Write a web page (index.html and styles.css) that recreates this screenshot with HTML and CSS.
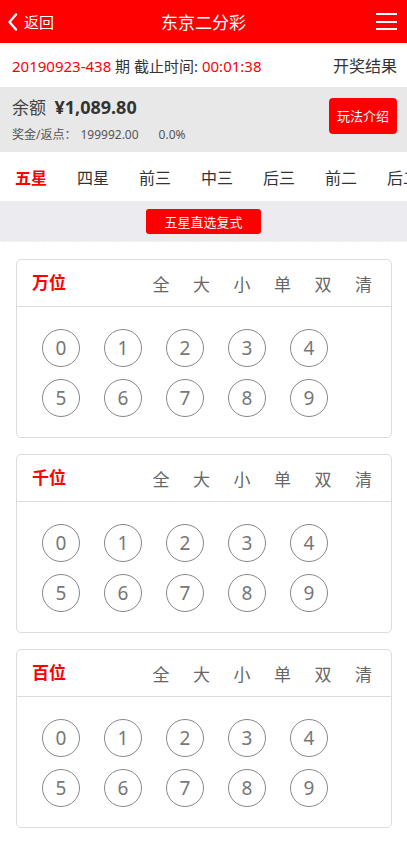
FILE: index.html
```html
<!DOCTYPE html>
<html lang="zh">
<head>
<meta charset="utf-8">
<link rel="stylesheet" href="styles.css">
</head>
<body>
<div class="app">
  <header class="topbar">
    <div class="back">
      <svg class="chev" width="11" height="18" viewBox="0 0 11 18"><path d="M9 1.5 L2.5 9 L9 16.5" fill="none" stroke="#fff" stroke-width="2.4" stroke-linecap="round" stroke-linejoin="round"/></svg>
      <span>返回</span>
    </div>
    <div class="title">东京二分彩</div>
    <div class="menu"><i></i><i></i><i></i></div>
  </header>

  <div class="issue">
    <div class="issue-left"><span class="red">20190923-438</span> 期 截止时间: <span class="red">00:01:38</span></div>
    <div class="issue-right">开奖结果</div>
  </div>

  <div class="balance">
    <div class="bal-info">
      <div class="bal-line"><span class="bal-label">余额</span> <b class="bal-amt">¥1,089.80</b></div>
      <div class="bal-sub"><span>奖金/返点：</span><span class="bal-num">199992.00</span><span class="bal-num2">0.0%</span></div>
    </div>
    <div class="rule-btn">玩法介绍</div>
  </div>

  <nav class="tabs">
    <span class="tab active">五星</span>
    <span class="tab">四星</span>
    <span class="tab">前三</span>
    <span class="tab">中三</span>
    <span class="tab">后三</span>
    <span class="tab">前二</span>
    <span class="tab">后二</span>
  </nav>

  <div class="mode-band"><div class="mode-btn">五星直选复式</div></div>

  <section class="cards">
    <div class="card">
      <div class="card-head"><span class="pos">万位</span><div class="ops"><span>全</span><span>大</span><span>小</span><span>单</span><span>双</span><span>清</span></div></div>
      <div class="balls">
        <span class="ball">0</span><span class="ball">1</span><span class="ball">2</span><span class="ball">3</span><span class="ball">4</span>
        <span class="ball">5</span><span class="ball">6</span><span class="ball">7</span><span class="ball">8</span><span class="ball">9</span>
      </div>
    </div>
    <div class="card">
      <div class="card-head"><span class="pos">千位</span><div class="ops"><span>全</span><span>大</span><span>小</span><span>单</span><span>双</span><span>清</span></div></div>
      <div class="balls">
        <span class="ball">0</span><span class="ball">1</span><span class="ball">2</span><span class="ball">3</span><span class="ball">4</span>
        <span class="ball">5</span><span class="ball">6</span><span class="ball">7</span><span class="ball">8</span><span class="ball">9</span>
      </div>
    </div>
    <div class="card">
      <div class="card-head"><span class="pos">百位</span><div class="ops"><span>全</span><span>大</span><span>小</span><span>单</span><span>双</span><span>清</span></div></div>
      <div class="balls">
        <span class="ball">0</span><span class="ball">1</span><span class="ball">2</span><span class="ball">3</span><span class="ball">4</span>
        <span class="ball">5</span><span class="ball">6</span><span class="ball">7</span><span class="ball">8</span><span class="ball">9</span>
      </div>
    </div>
  </section>
</div>
</body>
</html>
```
FILE: styles.css
```css
* { box-sizing: border-box; margin: 0; padding: 0; }
html, body { background: #fff; }
body {
  margin: 0;
  font-family: "Noto Sans", "Noto Sans CJK SC", sans-serif;
  color: #333;
  overflow: hidden;
}
.app { width: 407px; }

.topbar {
  height: 43px;
  background: #ff0000;
  color: #fff;
  display: flex;
  align-items: center;
  justify-content: space-between;
  padding: 0 10px 0 7px;
  position: relative;
}
.back { display: flex; align-items: center; gap: 6px; font-size: 15px; }
.chev { display: block; }
.title {
  position: absolute;
  left: 0; right: 0;
  text-align: center;
  font-size: 17px;
  pointer-events: none;
}
.menu { width: 21px; display: flex; flex-direction: column; gap: 5.5px; }
.menu i { display: block; height: 2px; background: #fff; }

.issue {
  height: 44px;
  display: flex;
  align-items: center;
  justify-content: space-between;
  padding: 0 10px 0 12px;
  font-size: 15px;
  color: #333;
}
.red { color: #ff0000; }
.issue-right { font-size: 16px; }

.balance {
  height: 65px;
  background: #e8e8e8;
  display: flex;
  align-items: center;
  justify-content: space-between;
  padding: 0 10px 0 12px;
}
.bal-line { font-size: 17px; color: #444; line-height: 22px; }
.bal-amt { font-size: 18px; color: #333; font-weight: 700; margin-left: 4px; }
.bal-sub { font-size: 12px; color: #555; margin-top: 6px; }
.bal-num { margin-left: 4px; }
.bal-num2 { margin-left: 20px; }
.rule-btn {
  background: #ff0000;
  color: #fff;
  font-size: 13px;
  width: 68px;
  height: 36px;
  border-radius: 4px;
  display: flex;
  align-items: center;
  justify-content: center;
  margin-top: -8px;
}

.tabs {
  height: 49px;
  display: flex;
  align-items: center;
  white-space: nowrap;
  overflow: hidden;
  background: #fff;
}
.tab { padding: 0 15px; font-size: 16px; color: #333; flex: none; width: 62px; }
.tab.active { color: #ff0000; font-weight: 700; }

.mode-band {
  height: 41px;
  background: #ebebf0;
  display: flex;
  align-items: center;
  justify-content: center;
  border-bottom: 1px dashed #f4f4f4;
}
.mode-btn {
  background: #ff0000;
  color: #fff;
  font-size: 13px;
  width: 115px;
  height: 25px;
  border-radius: 3px;
  display: flex;
  align-items: center;
  justify-content: center;
}

.cards { padding: 17px 15px 0 16px; display: flex; flex-direction: column; gap: 16px; }
.card {
  border: 1px solid #dcdcdc;
  border-radius: 5px;
  height: 179px;
}
.card-head {
  height: 47px;
  border-bottom: 1px solid #dcdcdc;
  display: flex;
  align-items: center;
  justify-content: space-between;
  padding: 0 19px 0 15px;
}
.pos { color: #ff0000; font-size: 17px; font-weight: 700; margin-top: -4px; }
.ops { display: flex; gap: 23.5px; font-size: 17px; color: #666; }
.ops span { width: 17px; text-align: center; }

.balls {
  display: grid;
  grid-template-columns: repeat(5, 38px);
  column-gap: 24px;
  row-gap: 12px;
  padding: 22px 0 0 25px;
}
.ball {
  width: 38px;
  height: 38px;
  border: 1px solid #888;
  border-radius: 50%;
  display: flex;
  align-items: center;
  justify-content: center;
  font-size: 19px;
  color: #777;
}
```
